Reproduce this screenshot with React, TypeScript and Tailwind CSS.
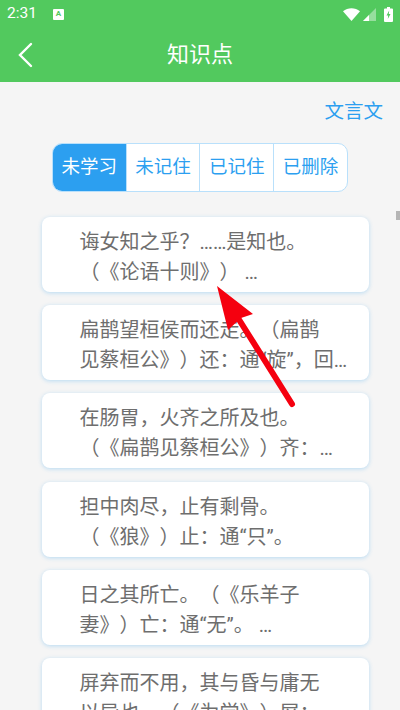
import React from 'react';

const CJK = "font-['Roboto','Noto_Sans_CJK_SC',sans-serif] [text-spacing-trim:space-all]";

const tabs = ['未学习', '未记住', '已记住', '已删除'];

const items: [string, string][] = [
  ['诲女知之乎？……是知也。', '（《论语十则》） …'],
  ['扁鹊望桓侯而还走。（扁鹊', '见蔡桓公》）还：通“旋”，回…'],
  ['在肠胃，火齐之所及也。', '（《扁鹊见蔡桓公》）齐：…'],
  ['担中肉尽，止有剩骨。', '（《狼》）止：通“只”。'],
  ['日之其所亡。（《乐羊子', '妻》）亡：通“无”。 …'],
  ['屏弃而不用，其与昏与庸无', '以异也。（《为学》）屏：'],
];

const StatusBar = () => (
  <div className="flex h-[28px] items-center pl-[7px] pr-[7px] text-white">
    <span className="font-['Roboto',sans-serif] text-[15.5px] leading-none">2:31</span>
    <div className="ml-[16px] flex h-[11px] w-[11px] items-center justify-center rounded-[1px] bg-white">
      <span className="font-['Roboto',sans-serif] text-[8px] font-bold leading-none text-[#52c95e]">A</span>
    </div>
    <div className="ml-auto flex items-center">
      <svg width="17" height="13" viewBox="0 0 17 13">
        <path d="M0 3.2 C4.8 -0.9 12.2 -0.9 17 3.2 L8.5 13 Z" fill="#fff" />
      </svg>
      <svg width="13" height="13" viewBox="0 0 13 13" className="ml-[3px]">
        <path d="M13 0 V13 H0 Z" fill="#fff" fillOpacity="0.4" />
        <path d="M6 7 V13 H0 Z" fill="#fff" />
      </svg>
      <svg width="9" height="15" viewBox="0 0 9 15" className="ml-[8px]">
        <path d="M3 0 H6 V1.5 H8 a1 1 0 0 1 1 1 V14 a1 1 0 0 1 -1 1 H1 a1 1 0 0 1 -1 -1 V2.5 a1 1 0 0 1 1 -1 H3 Z" fill="#fff" />
        <path d="M5.2 3.5 L2.5 8.6 H4.2 L3.8 12 L6.5 6.9 H4.8 Z" fill="#52c95e" />
      </svg>
    </div>
  </div>
);

const Header = () => (
  <div className="bg-[#52c95e]">
    <StatusBar />
    <div className="relative flex h-[54px] items-center justify-center">
      <svg width="18" height="26" viewBox="0 0 18 26" className="absolute left-[16px] top-[14px]" fill="none">
        <path d="M15 2 L4 13 L15 24" stroke="#fff" strokeWidth="2.4" strokeLinecap="round" />
      </svg>
      <span className="text-[22px] leading-none text-white">知识点</span>
    </div>
  </div>
);

const Tabs = () => (
  <div className="ml-[52px] mt-[16px] flex h-[49px] w-[296px] overflow-hidden rounded-[10px] border border-[#b9e0fb] bg-white">
    {tabs.map((t, i) => (
      <div
        key={t}
        className={
          i === 0
            ? 'flex w-[72.5px] items-center justify-center bg-[#2c9ff0] text-[18.5px] text-white'
            : 'flex flex-1 items-center justify-center border-l border-[#b9e0fb] text-[18.5px] text-[#2c9ff0]'
        }
      >
        {t}
      </div>
    ))}
  </div>
);

export default function App() {
  return (
    <div className={`relative h-[710px] w-[400px] overflow-hidden bg-[#f5f5f5] ${CJK}`}>
      <Header />

      <div className="flex justify-end pr-[17px] pt-[15px]">
        <span className="text-[19.5px] leading-[30px] text-[#2c9ff0]">文言文</span>
      </div>

      <Tabs />

      <div className="ml-[42px] mt-[25px] flex w-[327px] flex-col gap-[13.2px]">
        {items.map(([a, b]) => (
          <div
            key={a}
            className="h-[75px] shrink-0 rounded-[8px] bg-white pl-[37.5px] pt-[10px] text-[20px] leading-[30px] whitespace-nowrap text-[#6e6e6e] shadow-[0_1px_4px_rgba(44,159,240,0.3)]"
          >
            <div>{a}</div>
            <div>{b}</div>
          </div>
        ))}
      </div>

      {/* scrollbar thumb */}
      <div className="absolute right-0 top-[211px] h-[9px] w-[4px] bg-[#b5b5b5]" />

      {/* red arrow drawn over the list */}
      <svg width="400" height="710" viewBox="0 0 400 710" className="pointer-events-none absolute left-0 top-0">
        <path d="M217 286 L253 314 L241 318 L228 330 Z" fill="#f5000f" />
        <path d="M238 318 L292 404" stroke="#f5000f" strokeWidth="6" strokeLinecap="round" />
      </svg>
    </div>
  );
}
